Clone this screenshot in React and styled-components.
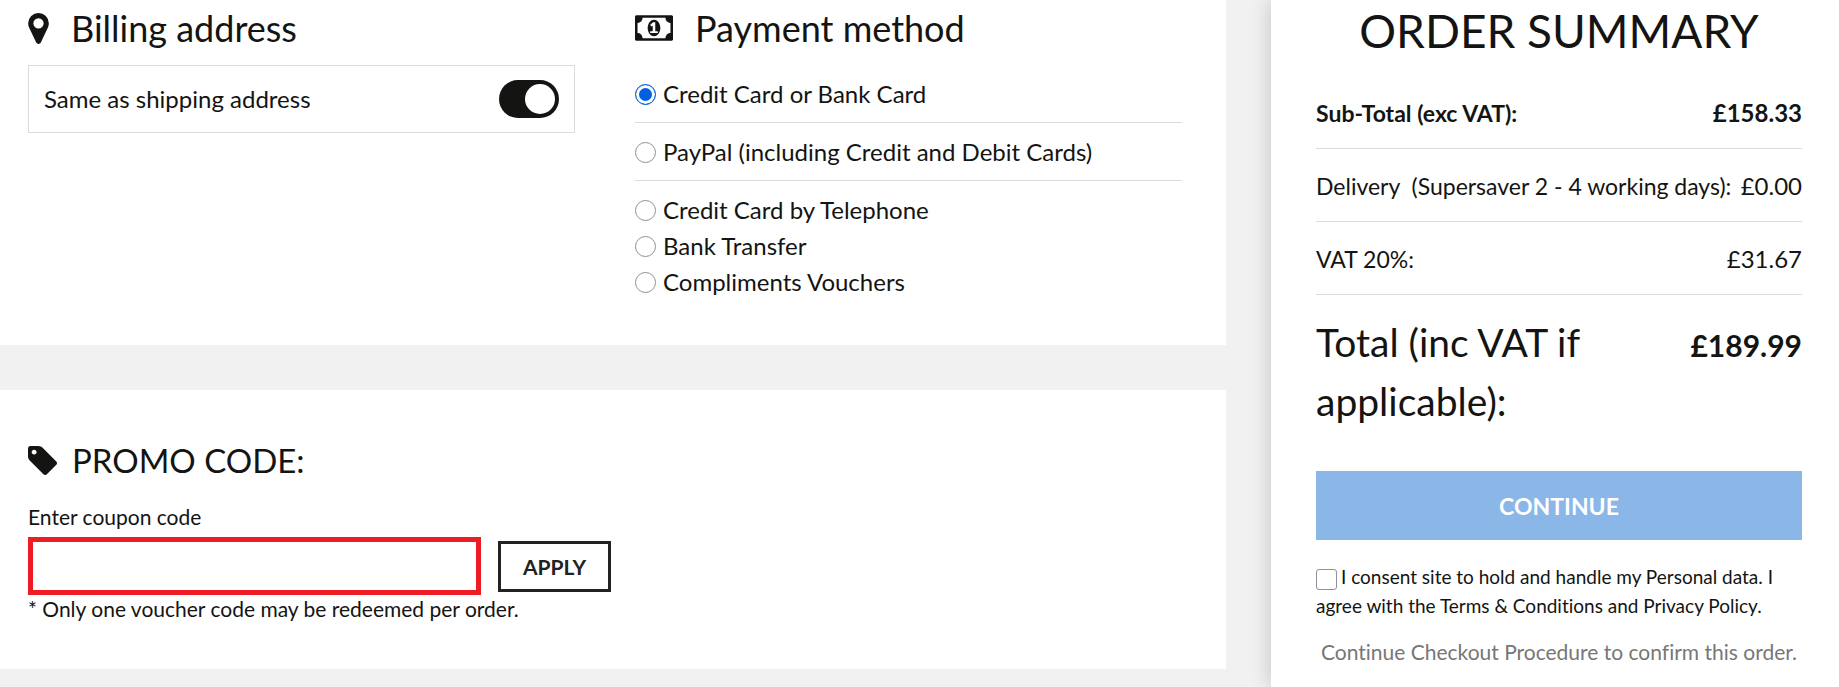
import React, { useState } from 'react'
import styled, { createGlobalStyle } from 'styled-components'

const paymentMethods = [
    { id: 'card', label: 'Credit Card or Bank Card', divider: true },
    { id: 'paypal', label: 'PayPal (including Credit and Debit Cards)', divider: true },
    { id: 'telephone', label: 'Credit Card by Telephone' },
    { id: 'transfer', label: 'Bank Transfer' },
    { id: 'vouchers', label: 'Compliments Vouchers' }
]

const summaryRows = [
    { label: 'Sub-Total (exc VAT):', price: '£158.33', strong: true },
    { label: 'Delivery \u00a0(Supersaver 2 - 4 working days):', price: '£0.00' },
    { label: 'VAT 20%:', price: '£31.67' }
]

const MarkerIcon = () => (
    <svg width='21' height='31' viewBox='0 128 1024 1536' fill='currentColor' aria-hidden='true'>
        <path d='M768 640q0-106-75-181t-181-75-181 75-75 181 75 181 181 75 181-75 75-181zm256 0q0 109-33 179l-364 774q-16 33-47.5 52t-67.5 19-67.5-19-46.5-52l-365-774q-33-70-33-179 0-212 150-362t362-150 362 150 150 362z' />
    </svg>
)

const MoneyIcon = () => (
    <svg width='38' height='26' viewBox='0 256 1920 1280' fill='currentColor' aria-hidden='true'>
        <path d='M768 1152h384v-96h-128v-448h-114l-148 137 77 80q42-37 55-57h2v288h-128v96zm512-256q0 70-21 142t-59.5 134-101.5 101-138 39-138-39-101.5-101-59.5-134-21-142 21-142 59.5-134 101.5-101 138-39 138 39 101.5 101 59.5 134 21 142zm512 256v-512q-106 0-181-75t-75-181h-1152q0 106-75 181t-181 75v512q106 0 181 75t75 181h1152q0-106 75-181t181-75zm128-832v1152q0 26-19 45t-45 19h-1792q-26 0-45-19t-19-45v-1152q0-26 19-45t45-19h1792q26 0 45 19t19 45z' />
    </svg>
)

const TagIcon = () => (
    <svg width='29' height='29' viewBox='128 128 1515 1515' fill='currentColor' aria-hidden='true'>
        <path d='M576 448q0-53-37.5-90.5t-90.5-37.5-90.5 37.5-37.5 90.5 37.5 90.5 90.5 37.5 90.5-37.5 37.5-90.5zm1067 576q0 53-37 90l-491 492q-39 37-91 37-53 0-90-37l-715-716q-38-37-64.5-101t-26.5-117v-416q0-52 38-90t90-38h416q53 0 117 26.5t102 64.5l715 714q37 39 37 91z' />
    </svg>
)

const App = () => {
    const [sameAddress, setSameAddress] = useState(true)
    const [method, setMethod] = useState('card')
    const [coupon, setCoupon] = useState('')
    const [consent, setConsent] = useState(false)

    return (
        <Page>
            <GlobalStyle />
            <Main>
                <Details>
                    <section>
                        <Heading><MarkerIcon />Billing address</Heading>
                        <ToggleRow>
                            Same as shipping address
                            <Toggle checked={sameAddress} onChange={e => setSameAddress(e.target.checked)} />
                        </ToggleRow>
                    </section>
                    <section>
                        <Heading><MoneyIcon />Payment method</Heading>
                        <Methods>
                            {paymentMethods.map(({id, label, divider}) => (
                                <Method key={id} $divider={divider}>
                                    <Radio name='method' value={id} checked={method === id} onChange={() => setMethod(id)} />
                                    {label}
                                </Method>
                            ))}
                        </Methods>
                    </section>
                </Details>
                <Promo onSubmit={e => e.preventDefault()}>
                    <Heading $small><TagIcon />PROMO CODE:</Heading>
                    <CouponLabel htmlFor='coupon'>Enter coupon code</CouponLabel>
                    <CouponRow>
                        <CouponInput id='coupon' value={coupon} onChange={e => setCoupon(e.target.value)} />
                        <ApplyButton type='submit'>APPLY</ApplyButton>
                    </CouponRow>
                    <CouponNote>* Only one voucher code may be redeemed per order.</CouponNote>
                </Promo>
            </Main>
            <Summary>
                <SummaryTitle>ORDER SUMMARY</SummaryTitle>
                {summaryRows.map(({label, price, strong}) => (
                    <SummaryRow key={label} $strong={strong}>
                        <span>{label}</span>
                        <Price>{price}</Price>
                    </SummaryRow>
                ))}
                <Total>
                    <span>Total (inc VAT if applicable):</span>
                    <strong>£189.99</strong>
                </Total>
                <ContinueButton type='button'>CONTINUE</ContinueButton>
                <Consent>
                    <Checkbox checked={consent} onChange={e => setConsent(e.target.checked)} />
                    I consent site to hold and handle my Personal data. I agree with the Terms &amp; Conditions and Privacy Policy.
                </Consent>
                <Hint>Continue Checkout Procedure to confirm this order.</Hint>
            </Summary>
        </Page>
    )
}

const GlobalStyle = createGlobalStyle`
    * {
        box-sizing: border-box;
    }
    body {
        background-color: #F1F1F1;
        color: #141412;
        font-family: Lato, sans-serif;
        font-variant-ligatures: none;
        margin: 0;
    }
    h1, h2, p {
        font-weight: 400;
        margin: 0;
    }
    button, input {
        font-family: inherit;
    }
`

const Page = styled.div`
    display: flex;
    gap: 45px;
    min-height: 100vh;
`

const Main = styled.main`
    display: flex;
    flex: none;
    flex-direction: column;
    gap: 45px;
    width: 66.667%;
`

const Details = styled.div`
    background-color: #FFF;
    display: grid;
    gap: 60px;
    grid-template-columns: 1fr 1fr;
    padding: 0 44px 45px 28px;
`

const Heading = styled.h2`
    align-items: center;
    display: flex;
    font-size: ${({$small}) => $small ? '33px' : '36px'};
    gap: ${({$small}) => $small ? '15px' : '22px'};
    line-height: 56px;
`

const ToggleRow = styled.label`
    align-items: center;
    border: 1px solid #DCDCDC;
    display: flex;
    font-size: 24px;
    justify-content: space-between;
    line-height: 36px;
    margin-top: 9px;
    padding: 14px 15px;
`

const Toggle = styled.input.attrs({ type: 'checkbox', role: 'switch' })`
    appearance: none;
    background-color: ${({checked}) => checked ? '#141412' : '#BBB'};
    border-radius: 19px;
    cursor: pointer;
    display: flex;
    height: 38px;
    justify-content: ${({checked}) => checked ? 'flex-end' : 'flex-start'};
    margin: 0;
    padding: 4px;
    width: 60px;

    &::before {
        background-color: #FFF;
        border-radius: 50%;
        content: '';
        height: 30px;
        width: 30px;
    }
`

const Methods = styled.div`
    margin-top: 9px;
`

const Method = styled.label`
    align-items: center;
    border-bottom: ${({$divider}) => $divider ? '1px solid #DCDCDC' : 'none'};
    display: flex;
    font-size: 24px;
    gap: 7px;
    line-height: 36px;
    padding: ${({$divider}) => $divider ? '11px 0 10px' : '0'};

    &:nth-child(3) {
        padding-top: 11px;
    }
`

const Radio = styled.input.attrs({ type: 'radio' })`
    appearance: none;
    background-color: #FFF;
    border: 1px solid #8F8F9D;
    border-radius: 50%;
    height: 21px;
    margin: 0;
    width: 21px;

    &:checked {
        background-color: #0060DF;
        border: 1px solid #0060DF;
        box-shadow: inset 0 0 0 3px #FFF;
    }
`

const Promo = styled.form`
    background-color: #FFF;
    padding: 42px 28px 46px;
`

const CouponLabel = styled.label`
    display: block;
    font-size: 21px;
    line-height: 32px;
    margin: 13px 0 4px;
`

const CouponRow = styled.div`
    align-items: center;
    display: flex;
    gap: 17px;
`

const CouponInput = styled.input`
    background-color: #FFF;
    border: 5px solid #EE1C25;
    font-size: 24px;
    height: 58px;
    padding: 0 12px;
    width: 453px;
`

const ApplyButton = styled.button`
    background-color: #FFF;
    border: 3px solid #222;
    color: #222;
    font-size: 21px;
    font-weight: 700;
    height: 51px;
    padding: 0 22px;
`

const CouponNote = styled.p`
    font-size: 21px;
    line-height: 28px;
`

const Summary = styled.aside`
    background-color: #FFF;
    box-shadow: 0 0 20px rgba(0, 0, 0, 0.2);
    flex: 1;
    min-width: 0;
    padding: 0 37px 20px 45px;
`

const SummaryTitle = styled.h1`
    font-size: 46px;
    line-height: 62px;
    margin-bottom: 14px;
    text-align: center;
`

const SummaryRow = styled.div`
    border-bottom: 1px solid #DCDCDC;
    display: flex;
    font-size: 23px;
    font-weight: ${({$strong}) => $strong ? 700 : 400};
    justify-content: space-between;
    line-height: 36px;
    padding: 19px 0 17px;
`

const Price = styled.span`
    font-size: 24px;
`

const Total = styled.div`
    align-items: baseline;
    display: flex;
    font-size: 39px;
    justify-content: space-between;
    line-height: 59px;
    padding-top: 18px;

    strong {
        font-size: 30px;
    }
`

const ContinueButton = styled.button`
    background-color: #8AB7E8;
    border: none;
    color: #FFF;
    display: block;
    font-size: 23px;
    font-weight: 700;
    height: 69px;
    margin-top: 40px;
    width: 100%;
`

const Consent = styled.label`
    display: block;
    font-size: 19px;
    line-height: 29px;
    margin-top: 22px;
`

const Checkbox = styled.input.attrs({ type: 'checkbox' })`
    appearance: none;
    background-color: ${({checked}) => checked ? '#0060DF' : '#FFF'};
    border: 1px solid #8F8F9D;
    border-radius: 3px;
    height: 21px;
    margin: 0 4px 0 0;
    vertical-align: middle;
    width: 21px;
`

const Hint = styled.p`
    color: #777;
    font-size: 21px;
    line-height: 28px;
    margin-top: 18px;
    text-align: center;
`

export default App
